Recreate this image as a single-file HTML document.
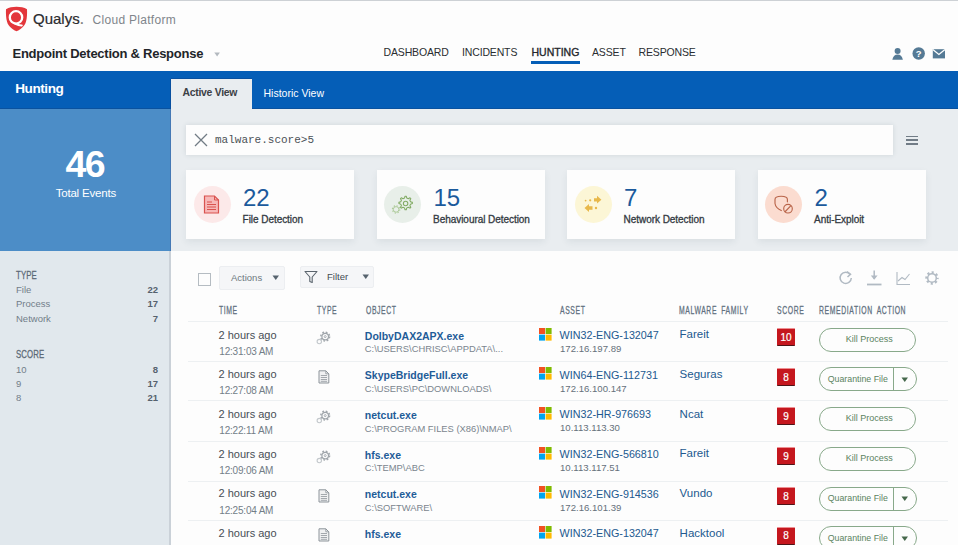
<!DOCTYPE html>
<html><head><meta charset="utf-8"><style>
html,body{margin:0;padding:0;width:958px;height:545px;overflow:hidden;background:#fdfdfd}
body{position:relative;font-family:'Liberation Sans', sans-serif}
.t{position:absolute;line-height:1;white-space:nowrap}
</style></head><body>
<div style="position:absolute;left:0px;top:0px;width:958px;height:545px;background:#fdfdfd"></div>
<div style="position:absolute;left:0px;top:0px;width:958px;height:1px;background:#cdd1d5"></div>
<div style="position:absolute;left:0px;top:71px;width:958px;height:38px;background:#055eb7"></div>
<div style="position:absolute;left:0px;top:108px;width:171px;height:1px;background:#0a529f"></div>
<div style="position:absolute;left:252px;top:108px;width:706px;height:1px;background:#0a529f"></div>
<div style="position:absolute;left:0px;top:109px;width:171px;height:142px;background:#4c8dc7"></div>
<div style="position:absolute;left:171px;top:109px;width:787px;height:142px;background:#e9edf0"></div>
<div style="position:absolute;left:171px;top:79px;width:81px;height:30px;background:#e9edf0"></div>
<div style="position:absolute;left:171px;top:78px;width:81px;height:1px;background:#0850a0"></div>
<div style="position:absolute;left:170px;top:79px;width:1px;height:30px;background:#0850a0"></div>
<div style="position:absolute;left:170px;top:109px;width:1px;height:142px;background:#4579b5"></div>
<div style="position:absolute;left:0px;top:251px;width:171px;height:294px;background:#e1e8ed"></div>
<div style="position:absolute;left:169px;top:251px;width:2px;height:294px;background:#cad1d8"></div>
<svg style="position:absolute;left:5px;top:6px" width="23" height="26" viewBox="0 0 23 26">
<path d="M11.5 0.8 C7.5 0.8 4 1.6 1 3.2 C0.8 9 1 15 3.5 19 C5.5 22 8.5 24 11.5 25.2 C14.5 24 17.5 22 19.5 19 C22 15 22.2 9 22 3.2 C19 1.6 15.5 0.8 11.5 0.8Z" fill="#e3363b"/>
<circle cx="11" cy="11.4" r="6.2" fill="none" stroke="#fff" stroke-width="2.3"/>
<path d="M10 17.6 Q14 19.6 16.8 19.4" fill="none" stroke="#fff" stroke-width="2" stroke-linecap="round"/>
</svg>
<div class="t" style="left:33.00px;top:10.80px;font-size:15px;color:#2b2b2e;font-weight:normal;-webkit-text-stroke:0.2px #2b2b2e;">Qualys<span style='color:#8a8a8a'>.</span></div>
<div class="t" style="left:92.50px;top:14.04px;font-size:12px;color:#80858b;font-weight:normal;letter-spacing:0.3px;">Cloud Platform</div>
<div class="t" style="left:12.50px;top:47.00px;font-size:13px;color:#222529;font-weight:bold;letter-spacing:-0.25px;">Endpoint Detection &amp; Response</div>
<svg style="position:absolute;left:214px;top:51.5px" width="7" height="6"><path d="M0.3 0.5 L5.9 0.5 L3.1 4.6Z" fill="#b3b9bf"/></svg>
<div class="t" style="left:383.50px;top:47.11px;font-size:10.5px;color:#2a2d31;font-weight:normal;letter-spacing:-0.15px;">DASHBOARD</div>
<div class="t" style="left:462.00px;top:47.11px;font-size:10.5px;color:#2a2d31;font-weight:normal;letter-spacing:-0.15px;">INCIDENTS</div>
<div class="t" style="left:531.50px;top:47.11px;font-size:10.5px;color:#25282c;font-weight:normal;-webkit-text-stroke:0.35px #25282c;">HUNTING</div>
<div class="t" style="left:592.00px;top:47.11px;font-size:10.5px;color:#2a2d31;font-weight:normal;letter-spacing:-0.15px;">ASSET</div>
<div class="t" style="left:638.50px;top:47.11px;font-size:10.5px;color:#2a2d31;font-weight:normal;letter-spacing:-0.15px;">RESPONSE</div>
<div style="position:absolute;left:531px;top:61px;width:49px;height:3px;background:#055eb7"></div>
<svg style="position:absolute;left:890px;top:46px" width="60" height="16" viewBox="0 0 60 16">
<circle cx="7.6" cy="5" r="3" fill="#557a95"/>
<path d="M2.3 13.8 C3 10.5 5 8.6 7.6 8.6 C10.2 8.6 12.2 10.5 12.9 13.8 Z" fill="#557a95"/>
<circle cx="28.7" cy="7.5" r="6.2" fill="#557a95"/>
<text x="28.7" y="11.2" font-family="Liberation Sans" font-weight="bold" font-size="9.5" fill="#fff" text-anchor="middle">?</text>
<rect x="42.8" y="3.2" width="12.2" height="9.2" fill="#557a95"/>
<path d="M42.8 3.6 L48.9 8.4 L55 3.6" fill="none" stroke="#fff" stroke-width="1.3"/>
</svg>
<div class="t" style="left:15.20px;top:82.19px;font-size:13.6px;color:#ffffff;font-weight:bold;letter-spacing:-0.45px;">Hunting</div>
<div class="t" style="left:182.40px;top:88.10px;font-size:10.4px;color:#3c4146;font-weight:bold;letter-spacing:-0.25px;">Active View</div>
<div class="t" style="left:263.50px;top:88.01px;font-size:10.5px;color:#ffffff;font-weight:normal;">Historic View</div>
<div class="t" style="left:65.50px;top:146.46px;font-size:37.5px;color:#ffffff;font-weight:bold;letter-spacing:-1.6px;">46</div>
<div class="t" style="left:55.70px;top:188.07px;font-size:11.5px;color:#ffffff;font-weight:normal;letter-spacing:-0.2px;">Total Events</div>
<div style="position:absolute;left:186px;top:125px;width:707px;height:29.5px;background:#fdfdfd;box-shadow:0 0 5px rgba(40,60,80,0.13)"></div>
<svg style="position:absolute;left:194px;top:133px" width="14" height="14"><path d="M1 1 L13 13 M13 1 L1 13" stroke="#717c85" stroke-width="1.3"/></svg>
<div class="t" style="left:215.00px;top:134.97px;font-size:11px;color:#4b5157;font-weight:normal;font-family:'Liberation Mono', monospace;">malware.score&gt;5</div>
<div style="position:absolute;left:906px;top:135.7px;width:12px;height:1.4px;background:#717c86"></div>
<div style="position:absolute;left:906px;top:139.4px;width:12px;height:1.4px;background:#717c86"></div>
<div style="position:absolute;left:906px;top:143.2px;width:12px;height:1.4px;background:#717c86"></div>
<div style="position:absolute;left:186px;top:170px;width:168px;height:69px;background:#fdfdfd;box-shadow:0 3px 7px rgba(40,60,80,0.08)"></div>
<div style="position:absolute;left:193.5px;top:186px;width:37px;height:37px;background:#fce9e9;border-radius:50%"></div>
<div class="t" style="left:243.00px;top:185.68px;font-size:24px;color:#1b5a9c;font-weight:normal;">22</div>
<div class="t" style="left:242.60px;top:214.53px;font-size:10px;color:#333a42;font-weight:normal;letter-spacing:-0.05px;-webkit-text-stroke:0.3px #333a42;">File Detection</div>
<div style="position:absolute;left:376.5px;top:170px;width:168px;height:69px;background:#fdfdfd;box-shadow:0 3px 7px rgba(40,60,80,0.08)"></div>
<div style="position:absolute;left:384.0px;top:186px;width:37px;height:37px;background:#e8efe9;border-radius:50%"></div>
<div class="t" style="left:433.50px;top:185.68px;font-size:24px;color:#1b5a9c;font-weight:normal;">15</div>
<div class="t" style="left:433.10px;top:214.53px;font-size:10px;color:#333a42;font-weight:normal;letter-spacing:-0.05px;-webkit-text-stroke:0.3px #333a42;">Behavioural Detection</div>
<div style="position:absolute;left:567px;top:170px;width:168px;height:69px;background:#fdfdfd;box-shadow:0 3px 7px rgba(40,60,80,0.08)"></div>
<div style="position:absolute;left:574.5px;top:186px;width:37px;height:37px;background:#fcf6d6;border-radius:50%"></div>
<div class="t" style="left:624.00px;top:185.68px;font-size:24px;color:#1b5a9c;font-weight:normal;">7</div>
<div class="t" style="left:623.60px;top:214.53px;font-size:10px;color:#333a42;font-weight:normal;letter-spacing:-0.05px;-webkit-text-stroke:0.3px #333a42;">Network Detection</div>
<div style="position:absolute;left:757.5px;top:170px;width:168px;height:69px;background:#fdfdfd;box-shadow:0 3px 7px rgba(40,60,80,0.08)"></div>
<div style="position:absolute;left:765.0px;top:186px;width:37px;height:37px;background:#fbdcd0;border-radius:50%"></div>
<div class="t" style="left:814.50px;top:185.68px;font-size:24px;color:#1b5a9c;font-weight:normal;">2</div>
<div class="t" style="left:814.10px;top:214.53px;font-size:10px;color:#333a42;font-weight:normal;letter-spacing:-0.05px;-webkit-text-stroke:0.3px #333a42;">Anti-Exploit</div>
<svg style="position:absolute;left:203px;top:195px" width="18" height="20" viewBox="0 0 18 20">
<path d="M1.5 1 L11.5 1 L15.5 5 L15.5 18 L1.5 18 Z" fill="#f7b8b8" stroke="#d9534f" stroke-width="1.2"/>
<path d="M11.5 1 L11.5 5 L15.5 5" fill="none" stroke="#d9534f" stroke-width="1"/>
<path d="M4 7 L9 7 M4 9.5 L13 9.5 M4 12 L13 12 M4 14.5 L13 14.5" stroke="#d9534f" stroke-width="1"/>
</svg>
<svg style="position:absolute;left:390px;top:192px" width="26" height="24" viewBox="0 0 26 24">
<g fill="none" stroke="#82ab64" stroke-width="1.15" stroke-linejoin="round">
<g transform="translate(15.6 11.5) scale(0.93) translate(-15.6 -10.8)">
<path d="M15 3 l1.3 0 0.6 2 1.6 0.7 1.8 -1 0.9 0.9 -1 1.8 0.7 1.6 2 0.6 0 1.3 -2 0.6 -0.7 1.6 1 1.8 -0.9 0.9 -1.8 -1 -1.6 0.7 -0.6 2 -1.3 0 -0.6 -2 -1.6 -0.7 -1.8 1 -0.9 -0.9 1 -1.8 -0.7 -1.6 -2 -0.6 0 -1.3 2 -0.6 0.7 -1.6 -1 -1.8 0.9 -0.9 1.8 1 1.6 -0.7 Z"/>
<circle cx="15.6" cy="10.8" r="2.4"/></g>
<circle cx="6.1" cy="17.4" r="2.8" stroke="#aecb9a" stroke-width="1"/>
<circle cx="6.1" cy="17.4" r="3.7" stroke="#aecb9a" stroke-width="1.1" stroke-dasharray="1.4 1.5"/>
</g></svg>
<svg style="position:absolute;left:582px;top:194px" width="22" height="20" viewBox="0 0 22 20">
<g fill="#e8b84a">
<circle cx="3.6" cy="6.6" r="0.9"/><circle cx="8.2" cy="6.3" r="1.1"/>
<path d="M12 4.2 L15 4.2 L15 1.8 L19.4 5.8 L15 9.6 L15 7.6 L12 7.6 Z"/>
<path d="M10.5 12.2 L7 12.2 L7 10 L2.5 14 L7 18 L7 15.8 L10.5 15.8 Z"/>
<circle cx="14" cy="14" r="1.2"/>
</g></svg>
<svg style="position:absolute;left:773px;top:194px" width="22" height="20" viewBox="0 0 22 20">
<g fill="none" stroke="#b9654a" stroke-width="1.15" stroke-linecap="round">
<path d="M14.4 7.8 L14.4 5.4 Q14.4 2.2 8.2 2.2 Q2 2.2 2 5.4 L2 9.5 Q2.6 13.8 8.3 16.6"/>
<circle cx="15" cy="14.7" r="4.3"/>
<path d="M17.7 11.9 L12.3 17.5"/>
</g></svg>
<div class="t" style="left:16.00px;top:269.51px;font-size:11.8px;color:#5b6875;font-weight:normal;letter-spacing:0.2px;transform:scaleX(0.66);transform-origin:0 0;-webkit-text-stroke:0.3px #5b6875;">TYPE</div>
<div class="t" style="left:16.00px;top:285.16px;font-size:9.5px;color:#727e89;font-weight:normal;">File</div>
<div class="t" style="right:800.00px;top:285.16px;font-size:9.5px;color:#56626d;font-weight:bold;">22</div>
<div class="t" style="left:16.00px;top:299.36px;font-size:9.5px;color:#727e89;font-weight:normal;">Process</div>
<div class="t" style="right:800.00px;top:299.36px;font-size:9.5px;color:#56626d;font-weight:bold;">17</div>
<div class="t" style="left:16.00px;top:313.56px;font-size:9.5px;color:#727e89;font-weight:normal;">Network</div>
<div class="t" style="right:800.00px;top:313.56px;font-size:9.5px;color:#56626d;font-weight:bold;">7</div>
<div class="t" style="left:16.00px;top:348.91px;font-size:11.8px;color:#5b6875;font-weight:normal;letter-spacing:0.2px;transform:scaleX(0.66);transform-origin:0 0;-webkit-text-stroke:0.3px #5b6875;">SCORE</div>
<div class="t" style="left:16.00px;top:364.56px;font-size:9.5px;color:#727e89;font-weight:normal;">10</div>
<div class="t" style="right:800.00px;top:364.56px;font-size:9.5px;color:#56626d;font-weight:bold;">8</div>
<div class="t" style="left:16.00px;top:378.66px;font-size:9.5px;color:#727e89;font-weight:normal;">9</div>
<div class="t" style="right:800.00px;top:378.66px;font-size:9.5px;color:#56626d;font-weight:bold;">17</div>
<div class="t" style="left:16.00px;top:392.76px;font-size:9.5px;color:#727e89;font-weight:normal;">8</div>
<div class="t" style="right:800.00px;top:392.76px;font-size:9.5px;color:#56626d;font-weight:bold;">21</div>
<div style="position:absolute;left:198px;top:273px;width:11px;height:11px;border:1px solid #b5bcc2;background:#fdfdfd"></div>
<div style="position:absolute;left:218.5px;top:266px;width:66.5px;height:24px;background:#f5f6f8;border:1px solid #eceef1;border-radius:2px;box-sizing:border-box"></div>
<div class="t" style="left:231.00px;top:273.46px;font-size:9.5px;color:#6d7880;font-weight:normal;">Actions</div>
<svg style="position:absolute;left:272px;top:275px" width="8" height="6"><path d="M0.5 0.5 L7 0.5 L3.75 5Z" fill="#56636e"/></svg>
<div style="position:absolute;left:300px;top:266px;width:74px;height:22px;background:#f5f6f8;border:1px solid #eceef1;border-radius:2px;box-sizing:border-box"></div>
<svg style="position:absolute;left:304px;top:270px" width="14" height="14"><path d="M1 1.5 L13 1.5 L8.2 7 L8.2 12.5 L5.8 11.5 L5.8 7 Z" fill="none" stroke="#5a646d" stroke-width="1.1" stroke-linejoin="round"/></svg>
<div class="t" style="left:327.00px;top:271.56px;font-size:9.5px;color:#444b52;font-weight:normal;">Filter</div>
<svg style="position:absolute;left:362px;top:273.5px" width="8" height="6"><path d="M0.5 0.5 L7 0.5 L3.75 5Z" fill="#56636e"/></svg>
<svg style="position:absolute;left:836px;top:268px" width="110" height="20" viewBox="0 0 110 20">
<g fill="none" stroke="#b1bac3" stroke-width="1.5">
<path d="M14.2 6.5 A5.6 5.6 0 1 0 15.3 10"/>
<path d="M11 3.5 L14.5 6.2 L11.5 9"/>
<path d="M38.2 2.5 L38.2 11"/>
<path d="M31 16.5 L45.5 16.5" stroke-width="1.8"/>
<path d="M61 4 L61 16.5 L74 16.5" stroke-width="1.1"/>
<path d="M62 13 L66 9.5 L69 11.5 L73.5 6" stroke-width="1.1"/>
</g>
<path d="M34.8 7.5 L41.6 7.5 L38.2 11.8 Z" fill="#b1bac3"/>
<g fill="none" stroke="#b1bac3">
<circle cx="96" cy="10" r="4.3" stroke-width="1.5"/>
<circle cx="96" cy="10" r="5.6" stroke-width="2.2" stroke-dasharray="2.1 2.298" stroke-dashoffset="1.05"/>
</g>
</svg>
<div class="t" style="left:219.00px;top:304.99px;font-size:11px;color:#617080;font-weight:normal;letter-spacing:1.0px;transform:scaleX(0.62);transform-origin:0 0;-webkit-text-stroke:0.3px #617080;">TIME</div>
<div class="t" style="left:316.60px;top:304.99px;font-size:11px;color:#617080;font-weight:normal;letter-spacing:1.0px;transform:scaleX(0.62);transform-origin:0 0;-webkit-text-stroke:0.3px #617080;">TYPE</div>
<div class="t" style="left:365.50px;top:304.99px;font-size:11px;color:#617080;font-weight:normal;letter-spacing:1.0px;transform:scaleX(0.62);transform-origin:0 0;-webkit-text-stroke:0.3px #617080;">OBJECT</div>
<div class="t" style="left:559.60px;top:304.99px;font-size:11px;color:#617080;font-weight:normal;letter-spacing:1.0px;transform:scaleX(0.62);transform-origin:0 0;-webkit-text-stroke:0.3px #617080;">ASSET</div>
<div class="t" style="left:679.00px;top:304.99px;font-size:11px;color:#617080;font-weight:normal;letter-spacing:1.0px;transform:scaleX(0.62);transform-origin:0 0;-webkit-text-stroke:0.3px #617080;">MALWARE<span style='margin-left:2.5px'> </span>FAMILY</div>
<div class="t" style="left:777.00px;top:304.99px;font-size:11px;color:#617080;font-weight:normal;letter-spacing:1.0px;transform:scaleX(0.62);transform-origin:0 0;-webkit-text-stroke:0.3px #617080;">SCORE</div>
<div class="t" style="left:819.30px;top:304.99px;font-size:11px;color:#617080;font-weight:normal;letter-spacing:1.0px;transform:scaleX(0.62);transform-origin:0 0;-webkit-text-stroke:0.3px #617080;">REMEDIATION<span style='margin-left:3px'> </span>ACTION</div>
<div style="position:absolute;left:188px;top:321px;width:760px;height:1px;background:#edf0f2"></div>
<div style="position:absolute;left:188px;top:361px;width:760px;height:1px;background:#edf0f2"></div>
<div style="position:absolute;left:188px;top:400px;width:760px;height:1px;background:#edf0f2"></div>
<div style="position:absolute;left:188px;top:441px;width:760px;height:1px;background:#edf0f2"></div>
<div style="position:absolute;left:188px;top:481px;width:760px;height:1px;background:#edf0f2"></div>
<div style="position:absolute;left:188px;top:520px;width:760px;height:1px;background:#edf0f2"></div>
<div class="t" style="left:218.50px;top:329.69px;font-size:11px;color:#474e55;font-weight:normal;">2 hours ago</div>
<div class="t" style="left:219.30px;top:346.74px;font-size:10px;color:#737e88;font-weight:normal;letter-spacing:-0.2px;">12:31:03 AM</div>
<svg style="position:absolute;left:315.8px;top:330.6px" width="15" height="14" viewBox="0 0 15 14">
<g fill="none" stroke="#a0a6ab">
<circle cx="9.2" cy="5.6" r="3.3" stroke-width="1.2"/>
<circle cx="9.2" cy="5.6" r="4.4" stroke-width="1.5" stroke-dasharray="1.73 1.73"/>
<circle cx="9.2" cy="5.6" r="1" stroke-width="0.9"/>
<circle cx="3.3" cy="10.6" r="2.2" stroke="#c3c8cc" stroke-width="1.1"/>
</g>
</svg>
<div class="t" style="left:364.80px;top:330.51px;font-size:10.5px;color:#1f5c98;font-weight:bold;">DolbyDAX2APX.exe</div>
<div class="t" style="left:364.80px;top:344.34px;font-size:9.4px;color:#7b858e;font-weight:normal;">C:\USERS\CHRISC\APPDATA\...</div>
<svg style="position:absolute;left:539px;top:327.6px" width="13" height="13" viewBox="0 0 13 13">
<rect x="0" y="0" width="6" height="6" fill="#f25022"/><rect x="6.6" y="0" width="6" height="6" fill="#7fba00"/>
<rect x="0" y="6.6" width="6" height="6" fill="#00a4ef"/><rect x="6.6" y="6.6" width="6" height="6" fill="#ffb900"/>
</svg>
<div class="t" style="left:559.60px;top:329.80px;font-size:10.75px;color:#22598f;font-weight:normal;">WIN32-ENG-132047</div>
<div class="t" style="left:560.00px;top:343.87px;font-size:9.6px;color:#66717b;font-weight:normal;">172.16.197.89</div>
<div class="t" style="left:679.60px;top:329.17px;font-size:11.5px;color:#22598f;font-weight:normal;">Fareit</div>
<div style="position:absolute;left:777px;top:328.0px;width:18px;height:18px;background:#c5171e;border-radius:1px;border-bottom:1.5px solid #4e1416;border-top:1px solid #ee8f92;box-sizing:border-box"></div>
<div class="t" style="left:786.00px;top:332.94px;font-size:10px;color:#ffffff;font-weight:normal;transform:translateX(-50%);-webkit-text-stroke:0.2px #fff;">10</div>
<div style="position:absolute;left:819px;top:327.7px;width:97px;height:24px;border:1px solid #88a98a;border-radius:12px;box-sizing:border-box;background:#fdfdfd"></div>
<div class="t" style="left:845.70px;top:334.88px;font-size:9px;color:#5b835f;font-weight:normal;">Kill Process</div>
<div class="t" style="left:218.50px;top:369.39px;font-size:11px;color:#474e55;font-weight:normal;">2 hours ago</div>
<div class="t" style="left:219.30px;top:386.44px;font-size:10px;color:#737e88;font-weight:normal;letter-spacing:-0.2px;">12:27:08 AM</div>
<svg style="position:absolute;left:318px;top:369.5px" width="12" height="14" viewBox="0 0 12 14">
<path d="M1 0.8 L7.8 0.8 L10.8 3.8 L10.8 13 L1 13 Z" fill="#f0f1f2" stroke="#8d949a" stroke-width="1"/>
<path d="M7.8 0.8 L7.8 3.8 L10.8 3.8" fill="none" stroke="#8d949a" stroke-width="0.8"/>
<path d="M2.8 5.5 L9 5.5 M2.8 7.5 L9 7.5 M2.8 9.5 L9 9.5 M2.8 11.3 L9 11.3" stroke="#9a9fa5" stroke-width="0.9"/>
</svg>
<div class="t" style="left:364.80px;top:370.21px;font-size:10.5px;color:#1f5c98;font-weight:bold;">SkypeBridgeFull.exe</div>
<div class="t" style="left:364.80px;top:384.04px;font-size:9.4px;color:#7b858e;font-weight:normal;">C:\USERS\PC\DOWNLOADS\</div>
<svg style="position:absolute;left:539px;top:367.3px" width="13" height="13" viewBox="0 0 13 13">
<rect x="0" y="0" width="6" height="6" fill="#f25022"/><rect x="6.6" y="0" width="6" height="6" fill="#7fba00"/>
<rect x="0" y="6.6" width="6" height="6" fill="#00a4ef"/><rect x="6.6" y="6.6" width="6" height="6" fill="#ffb900"/>
</svg>
<div class="t" style="left:559.60px;top:369.50px;font-size:10.75px;color:#22598f;font-weight:normal;">WIN64-ENG-112731</div>
<div class="t" style="left:560.00px;top:383.57px;font-size:9.6px;color:#66717b;font-weight:normal;">172.16.100.147</div>
<div class="t" style="left:679.60px;top:368.87px;font-size:11.5px;color:#22598f;font-weight:normal;">Seguras</div>
<div style="position:absolute;left:777px;top:367.7px;width:18px;height:18px;background:#c5171e;border-radius:1px;border-bottom:1.5px solid #4e1416;border-top:1px solid #ee8f92;box-sizing:border-box"></div>
<div class="t" style="left:786.00px;top:372.63px;font-size:10px;color:#ffffff;font-weight:normal;transform:translateX(-50%);-webkit-text-stroke:0.2px #fff;">8</div>
<div style="position:absolute;left:818.5px;top:367.4px;width:98px;height:24px;border:1px solid #88a98a;border-radius:12px;box-sizing:border-box;background:#fdfdfd"></div>
<div style="position:absolute;left:893px;top:367.9px;width:1px;height:23px;background:#88a98a"></div>
<div class="t" style="left:827.70px;top:374.75px;font-size:8.8px;color:#5b835f;font-weight:normal;">Quarantine File</div>
<svg style="position:absolute;left:901px;top:376.7px" width="8" height="6"><path d="M0.5 0.5 L7 0.5 L3.75 5Z" fill="#46684c"/></svg>
<div class="t" style="left:218.50px;top:409.09px;font-size:11px;color:#474e55;font-weight:normal;">2 hours ago</div>
<div class="t" style="left:219.30px;top:426.13px;font-size:10px;color:#737e88;font-weight:normal;letter-spacing:-0.2px;">12:22:11 AM</div>
<svg style="position:absolute;left:315.8px;top:410.0px" width="15" height="14" viewBox="0 0 15 14">
<g fill="none" stroke="#a0a6ab">
<circle cx="9.2" cy="5.6" r="3.3" stroke-width="1.2"/>
<circle cx="9.2" cy="5.6" r="4.4" stroke-width="1.5" stroke-dasharray="1.73 1.73"/>
<circle cx="9.2" cy="5.6" r="1" stroke-width="0.9"/>
<circle cx="3.3" cy="10.6" r="2.2" stroke="#c3c8cc" stroke-width="1.1"/>
</g>
</svg>
<div class="t" style="left:364.80px;top:409.91px;font-size:10.5px;color:#1f5c98;font-weight:bold;">netcut.exe</div>
<div class="t" style="left:364.80px;top:423.74px;font-size:9.4px;color:#7b858e;font-weight:normal;">C:\PROGRAM FILES (X86)\NMAP\</div>
<svg style="position:absolute;left:539px;top:407.0px" width="13" height="13" viewBox="0 0 13 13">
<rect x="0" y="0" width="6" height="6" fill="#f25022"/><rect x="6.6" y="0" width="6" height="6" fill="#7fba00"/>
<rect x="0" y="6.6" width="6" height="6" fill="#00a4ef"/><rect x="6.6" y="6.6" width="6" height="6" fill="#ffb900"/>
</svg>
<div class="t" style="left:559.60px;top:409.20px;font-size:10.75px;color:#22598f;font-weight:normal;">WIN32-HR-976693</div>
<div class="t" style="left:560.00px;top:423.27px;font-size:9.6px;color:#66717b;font-weight:normal;">10.113.113.30</div>
<div class="t" style="left:679.60px;top:408.57px;font-size:11.5px;color:#22598f;font-weight:normal;">Ncat</div>
<div style="position:absolute;left:777px;top:407.4px;width:18px;height:18px;background:#c5171e;border-radius:1px;border-bottom:1.5px solid #4e1416;border-top:1px solid #ee8f92;box-sizing:border-box"></div>
<div class="t" style="left:786.00px;top:412.33px;font-size:10px;color:#ffffff;font-weight:normal;transform:translateX(-50%);-webkit-text-stroke:0.2px #fff;">9</div>
<div style="position:absolute;left:819px;top:407.1px;width:97px;height:24px;border:1px solid #88a98a;border-radius:12px;box-sizing:border-box;background:#fdfdfd"></div>
<div class="t" style="left:845.70px;top:414.28px;font-size:9px;color:#5b835f;font-weight:normal;">Kill Process</div>
<div class="t" style="left:218.50px;top:448.79px;font-size:11px;color:#474e55;font-weight:normal;">2 hours ago</div>
<div class="t" style="left:219.30px;top:465.84px;font-size:10px;color:#737e88;font-weight:normal;letter-spacing:-0.2px;">12:09:06 AM</div>
<svg style="position:absolute;left:315.8px;top:449.7px" width="15" height="14" viewBox="0 0 15 14">
<g fill="none" stroke="#a0a6ab">
<circle cx="9.2" cy="5.6" r="3.3" stroke-width="1.2"/>
<circle cx="9.2" cy="5.6" r="4.4" stroke-width="1.5" stroke-dasharray="1.73 1.73"/>
<circle cx="9.2" cy="5.6" r="1" stroke-width="0.9"/>
<circle cx="3.3" cy="10.6" r="2.2" stroke="#c3c8cc" stroke-width="1.1"/>
</g>
</svg>
<div class="t" style="left:364.80px;top:449.61px;font-size:10.5px;color:#1f5c98;font-weight:bold;">hfs.exe</div>
<div class="t" style="left:364.80px;top:463.44px;font-size:9.4px;color:#7b858e;font-weight:normal;">C:\TEMP\ABC</div>
<svg style="position:absolute;left:539px;top:446.7px" width="13" height="13" viewBox="0 0 13 13">
<rect x="0" y="0" width="6" height="6" fill="#f25022"/><rect x="6.6" y="0" width="6" height="6" fill="#7fba00"/>
<rect x="0" y="6.6" width="6" height="6" fill="#00a4ef"/><rect x="6.6" y="6.6" width="6" height="6" fill="#ffb900"/>
</svg>
<div class="t" style="left:559.60px;top:448.90px;font-size:10.75px;color:#22598f;font-weight:normal;">WIN32-ENG-566810</div>
<div class="t" style="left:560.00px;top:462.97px;font-size:9.6px;color:#66717b;font-weight:normal;">10.113.117.51</div>
<div class="t" style="left:679.60px;top:448.27px;font-size:11.5px;color:#22598f;font-weight:normal;">Fareit</div>
<div style="position:absolute;left:777px;top:447.1px;width:18px;height:18px;background:#c5171e;border-radius:1px;border-bottom:1.5px solid #4e1416;border-top:1px solid #ee8f92;box-sizing:border-box"></div>
<div class="t" style="left:786.00px;top:452.04px;font-size:10px;color:#ffffff;font-weight:normal;transform:translateX(-50%);-webkit-text-stroke:0.2px #fff;">9</div>
<div style="position:absolute;left:819px;top:446.8px;width:97px;height:24px;border:1px solid #88a98a;border-radius:12px;box-sizing:border-box;background:#fdfdfd"></div>
<div class="t" style="left:845.70px;top:453.98px;font-size:9px;color:#5b835f;font-weight:normal;">Kill Process</div>
<div class="t" style="left:218.50px;top:488.49px;font-size:11px;color:#474e55;font-weight:normal;">2 hours ago</div>
<div class="t" style="left:219.30px;top:505.54px;font-size:10px;color:#737e88;font-weight:normal;letter-spacing:-0.2px;">12:25:04 AM</div>
<svg style="position:absolute;left:318px;top:488.6px" width="12" height="14" viewBox="0 0 12 14">
<path d="M1 0.8 L7.8 0.8 L10.8 3.8 L10.8 13 L1 13 Z" fill="#f0f1f2" stroke="#8d949a" stroke-width="1"/>
<path d="M7.8 0.8 L7.8 3.8 L10.8 3.8" fill="none" stroke="#8d949a" stroke-width="0.8"/>
<path d="M2.8 5.5 L9 5.5 M2.8 7.5 L9 7.5 M2.8 9.5 L9 9.5 M2.8 11.3 L9 11.3" stroke="#9a9fa5" stroke-width="0.9"/>
</svg>
<div class="t" style="left:364.80px;top:489.31px;font-size:10.5px;color:#1f5c98;font-weight:bold;">netcut.exe</div>
<div class="t" style="left:364.80px;top:503.14px;font-size:9.4px;color:#7b858e;font-weight:normal;">C:\SOFTWARE\</div>
<svg style="position:absolute;left:539px;top:486.4px" width="13" height="13" viewBox="0 0 13 13">
<rect x="0" y="0" width="6" height="6" fill="#f25022"/><rect x="6.6" y="0" width="6" height="6" fill="#7fba00"/>
<rect x="0" y="6.6" width="6" height="6" fill="#00a4ef"/><rect x="6.6" y="6.6" width="6" height="6" fill="#ffb900"/>
</svg>
<div class="t" style="left:559.60px;top:488.60px;font-size:10.75px;color:#22598f;font-weight:normal;">WIN32-ENG-914536</div>
<div class="t" style="left:560.00px;top:502.67px;font-size:9.6px;color:#66717b;font-weight:normal;">172.16.101.39</div>
<div class="t" style="left:679.60px;top:487.97px;font-size:11.5px;color:#22598f;font-weight:normal;">Vundo</div>
<div style="position:absolute;left:777px;top:486.8px;width:18px;height:18px;background:#c5171e;border-radius:1px;border-bottom:1.5px solid #4e1416;border-top:1px solid #ee8f92;box-sizing:border-box"></div>
<div class="t" style="left:786.00px;top:491.74px;font-size:10px;color:#ffffff;font-weight:normal;transform:translateX(-50%);-webkit-text-stroke:0.2px #fff;">8</div>
<div style="position:absolute;left:818.5px;top:486.5px;width:98px;height:24px;border:1px solid #88a98a;border-radius:12px;box-sizing:border-box;background:#fdfdfd"></div>
<div style="position:absolute;left:893px;top:487.0px;width:1px;height:23px;background:#88a98a"></div>
<div class="t" style="left:827.70px;top:493.85px;font-size:8.8px;color:#5b835f;font-weight:normal;">Quarantine File</div>
<svg style="position:absolute;left:901px;top:495.8px" width="8" height="6"><path d="M0.5 0.5 L7 0.5 L3.75 5Z" fill="#46684c"/></svg>
<div class="t" style="left:218.50px;top:528.19px;font-size:11px;color:#474e55;font-weight:normal;">2 hours ago</div>
<svg style="position:absolute;left:318px;top:528.3px" width="12" height="14" viewBox="0 0 12 14">
<path d="M1 0.8 L7.8 0.8 L10.8 3.8 L10.8 13 L1 13 Z" fill="#f0f1f2" stroke="#8d949a" stroke-width="1"/>
<path d="M7.8 0.8 L7.8 3.8 L10.8 3.8" fill="none" stroke="#8d949a" stroke-width="0.8"/>
<path d="M2.8 5.5 L9 5.5 M2.8 7.5 L9 7.5 M2.8 9.5 L9 9.5 M2.8 11.3 L9 11.3" stroke="#9a9fa5" stroke-width="0.9"/>
</svg>
<div class="t" style="left:364.80px;top:529.01px;font-size:10.5px;color:#1f5c98;font-weight:bold;">hfs.exe</div>
<svg style="position:absolute;left:539px;top:526.1px" width="13" height="13" viewBox="0 0 13 13">
<rect x="0" y="0" width="6" height="6" fill="#f25022"/><rect x="6.6" y="0" width="6" height="6" fill="#7fba00"/>
<rect x="0" y="6.6" width="6" height="6" fill="#00a4ef"/><rect x="6.6" y="6.6" width="6" height="6" fill="#ffb900"/>
</svg>
<div class="t" style="left:559.60px;top:528.30px;font-size:10.75px;color:#22598f;font-weight:normal;">WIN32-ENG-132047</div>
<div class="t" style="left:679.60px;top:527.67px;font-size:11.5px;color:#22598f;font-weight:normal;">Hacktool</div>
<div style="position:absolute;left:777px;top:526.5px;width:18px;height:18px;background:#c5171e;border-radius:1px;border-bottom:1.5px solid #4e1416;border-top:1px solid #ee8f92;box-sizing:border-box"></div>
<div class="t" style="left:786.00px;top:531.43px;font-size:10px;color:#ffffff;font-weight:normal;transform:translateX(-50%);-webkit-text-stroke:0.2px #fff;">8</div>
<div style="position:absolute;left:818.5px;top:526.2px;width:98px;height:24px;border:1px solid #88a98a;border-radius:12px;box-sizing:border-box;background:#fdfdfd"></div>
<div style="position:absolute;left:893px;top:526.7px;width:1px;height:23px;background:#88a98a"></div>
<div class="t" style="left:827.70px;top:533.55px;font-size:8.8px;color:#5b835f;font-weight:normal;">Quarantine File</div>
<svg style="position:absolute;left:901px;top:535.5px" width="8" height="6"><path d="M0.5 0.5 L7 0.5 L3.75 5Z" fill="#46684c"/></svg>
</body></html>
